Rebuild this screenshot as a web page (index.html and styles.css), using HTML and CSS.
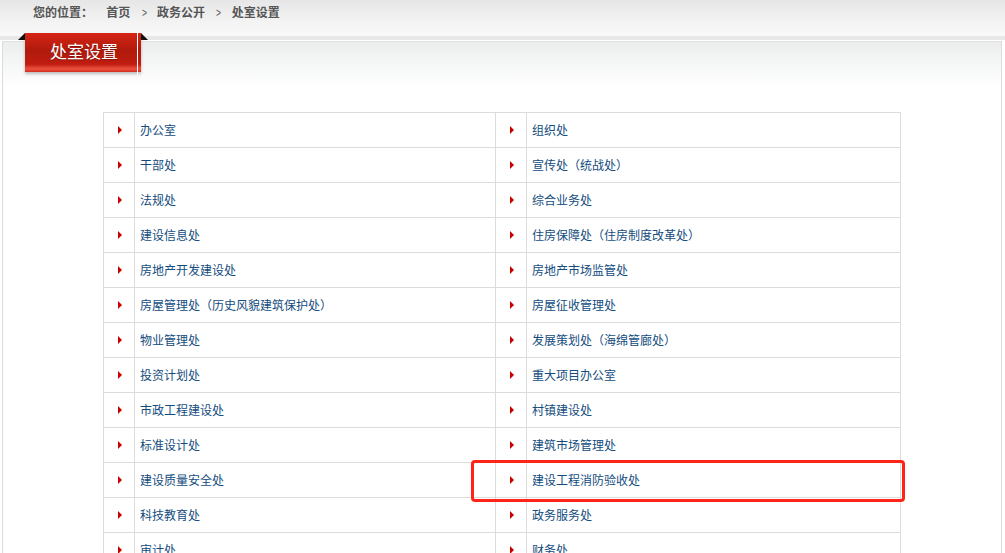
FILE: index.html
```html
<!DOCTYPE html>
<html lang="zh-CN">
<head>
    <meta charset="UTF-8">
    <title>处室设置</title>
    <link rel="stylesheet" href="styles.css">
</head>
<body>
    <div class="crumb">
        <span class="crumb-label">您的位置：</span>
        <a href="#">首页</a>
        <span class="sep">&gt;</span>
        <a href="#">政务公开</a>
        <span class="sep">&gt;</span>
        <span>处室设置</span>
    </div>
    <div class="panel">
        <div class="tab">
            <span class="ear ear-left"></span>
            <span class="tab-text">处室设置</span>
            <span class="ear ear-right"></span>
        </div>
        <table class="dept">
            <colgroup>
                <col class="c-ico"><col class="c-left"><col class="c-ico"><col>
            </colgroup>
            <tr><td class="ico"><i></i></td><td class="name">办公室</td><td class="ico"><i></i></td><td class="name">组织处</td></tr>
            <tr><td class="ico"><i></i></td><td class="name">干部处</td><td class="ico"><i></i></td><td class="name">宣传处（统战处）</td></tr>
            <tr><td class="ico"><i></i></td><td class="name">法规处</td><td class="ico"><i></i></td><td class="name">综合业务处</td></tr>
            <tr><td class="ico"><i></i></td><td class="name">建设信息处</td><td class="ico"><i></i></td><td class="name">住房保障处（住房制度改革处）</td></tr>
            <tr><td class="ico"><i></i></td><td class="name">房地产开发建设处</td><td class="ico"><i></i></td><td class="name">房地产市场监管处</td></tr>
            <tr><td class="ico"><i></i></td><td class="name">房屋管理处（历史风貌建筑保护处）</td><td class="ico"><i></i></td><td class="name">房屋征收管理处</td></tr>
            <tr><td class="ico"><i></i></td><td class="name">物业管理处</td><td class="ico"><i></i></td><td class="name">发展策划处（海绵管廊处）</td></tr>
            <tr><td class="ico"><i></i></td><td class="name">投资计划处</td><td class="ico"><i></i></td><td class="name">重大项目办公室</td></tr>
            <tr><td class="ico"><i></i></td><td class="name">市政工程建设处</td><td class="ico"><i></i></td><td class="name">村镇建设处</td></tr>
            <tr><td class="ico"><i></i></td><td class="name">标准设计处</td><td class="ico"><i></i></td><td class="name">建筑市场管理处</td></tr>
            <tr><td class="ico"><i></i></td><td class="name">建设质量安全处</td><td class="ico"><i></i></td><td class="name mark-cell">建设工程消防验收处<span class="mark"></span></td></tr>
            <tr><td class="ico"><i></i></td><td class="name">科技教育处</td><td class="ico"><i></i></td><td class="name">政务服务处</td></tr>
            <tr><td class="ico"><i></i></td><td class="name">审计处</td><td class="ico"><i></i></td><td class="name">财务处</td></tr>
        </table>
    </div>
</body>
</html>
```

FILE: styles.css
```css
body {
    margin: 0;
    font-family: "Liberation Sans", "Noto Sans CJK SC", sans-serif;
    font-size: 12px;
    background-color: #fff;
    overflow: hidden;
}
.crumb {
    height: 24px;
    padding: 1px 0 11px 33px;
    line-height: 24px;
    color: #555;
    font-weight: bold;
    background: linear-gradient(#e6e6e6, #f3f3f3 60%, #f9f9f9);
    border-bottom: 4px solid #e8e8e8;
}
.crumb a {
    color: #555;
    text-decoration: none;
}
.crumb-label {
    margin-right: 10px;
}
.sep {
    display: inline-block;
    margin: 0 6px 0 7px;
    font-weight: normal;
    transform: scaleX(0.7);
}
.panel {
    margin: 1px 3px 0 2px;
    border-left: 1px solid #dcdcdc;
    border-right: 1px solid #dcdcdc;
    border-top: 1px solid #e0e0e0;
    background: linear-gradient(#eceeee, #fff 45px);
    height: 600px;
    position: relative;
}
.tab {
    position: absolute;
    left: 22px;
    top: -9px;
    width: 116px;
    height: 39px;
    background: linear-gradient(#d52515, #b01a0c 45%, #c01d10 80%, #ec5040 92%, #d42c1c);
    box-shadow: 0 2px 3px rgba(0,0,0,0.25);
    text-align: center;
}
.tab::after {
    content: "";
    position: absolute;
    right: 3px;
    top: 0;
    bottom: -3px;
    width: 1px;
    background: #fff;
}
.tab-text {
    display: block;
    color: #fff;
    font-size: 17px;
    line-height: 38px;
    padding: 1px 8px 0 10px;
    text-shadow: 0 1px 1px rgba(0,0,0,0.3);
}
.ear {
    position: absolute;
    top: 0;
    width: 0;
    height: 0;
    border-top: 7px solid transparent;
}
.ear-left {
    left: -7px;
    border-right: 7px solid #111;
}
.ear-right {
    right: -7px;
    border-left: 7px solid #111;
}
.dept {
    position: relative;
    top: 70px;
    margin-left: 100px;
    width: 798px;
    border-collapse: collapse;
    table-layout: fixed;
}
.c-ico {
    width: 31px;
}
.c-left {
    width: 361px;
}
.dept td {
    border: 1px solid #dcdcdc;
    height: 33px;
    padding: 0 0 1px 0;
}
.ico {
    text-align: center;
}
.ico i {
    display: inline-block;
    width: 0;
    height: 0;
    border-top: 4px solid transparent;
    border-bottom: 4px solid transparent;
    border-left: 4px solid #c80000;
    margin-left: 2px;
    vertical-align: middle;
}
.name {
    padding-left: 5px !important;
    color: #134c7e;
    font-family: "Noto Sans CJK SC", sans-serif;
}
.mark-cell {
    position: relative;
}
.mark {
    position: absolute;
    left: -56px;
    top: -3px;
    width: 428px;
    height: 36px;
    border: 3px solid #ff2418;
    border-radius: 4px;
}
```
